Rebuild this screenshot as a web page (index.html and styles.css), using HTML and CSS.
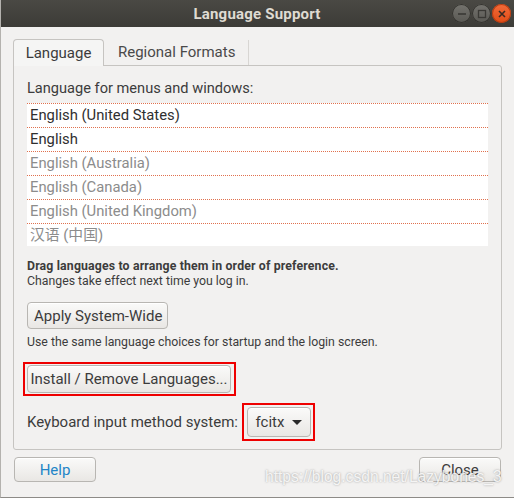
FILE: index.html
```html
<!DOCTYPE html>
<html>
<head>
<meta charset="utf-8">
<link rel="stylesheet" href="styles.css">
</head>
<body>
<div class="window">
  <div class="titlebar">
    <div></div>
    <div class="title">Language Support</div>
    <div class="wm-buttons">
      <span class="wm wm-min"><svg width="18" height="18" viewBox="0 0 18 18"><line x1="5" y1="9" x2="13" y2="9" stroke="#3a3935" stroke-width="1.6"/></svg></span>
      <span class="wm wm-max"><svg width="18" height="18" viewBox="0 0 18 18"><rect x="5.5" y="5.5" width="7" height="7" fill="none" stroke="#3a3935" stroke-width="1.3"/></svg></span>
      <span class="wm wm-close"><svg width="18" height="18" viewBox="0 0 18 18"><path d="M6 6 L12 12 M12 6 L6 12" stroke="#3a2a22" stroke-width="1.6"/></svg></span>
    </div>
  </div>
  <div class="content">
    <div class="tabs">
      <div class="tab tab-active">Language</div>
      <div class="tab tab-inactive">Regional Formats</div>
    </div>
    <div class="frame">
      <div class="label">Language for menus and windows:</div>
      <div class="list">
        <div class="row row-dark">English (United States)</div>
        <div class="row row-dark">English</div>
        <div class="row">English (Australia)</div>
        <div class="row">English (Canada)</div>
        <div class="row">English (United Kingdom)</div>
        <div class="row">汉语 (中国)</div>
      </div>
      <div class="note note-bold">Drag languages to arrange them in order of preference.</div>
      <div class="note">Changes take effect next time you log in.</div>
      <button class="btn btn-apply">Apply System-Wide</button>
      <div class="note note-use">Use the same language choices for startup and the login screen.</div>
      <div class="highlight hl-install">
        <button class="btn btn-install">Install / Remove Languages...</button>
      </div>
      <div class="kbd-row">
        <span class="label kbd-label">Keyboard input method system:</span>
        <div class="highlight hl-combo">
          <button class="btn combo">fcitx <span class="arrow"></span></button>
        </div>
      </div>
    </div>
    <div class="actions">
      <button class="btn btn-action btn-help">Help</button>
      <button class="btn btn-action btn-close">Close</button>
    </div>
  </div>
  <div class="watermark">https://blog.csdn.net/Lazybones_3</div>
</div>
</body>
</html>
```
FILE: styles.css
```css
html, body {
  margin: 0;
  padding: 0;
}
body {
  font-family: Roboto, "Noto Sans", sans-serif;
  background: #f2f1f0;
  color: #3c3c3c;
}
.window {
  width: 514px;
  height: 498px;
  box-sizing: border-box;
  border-left: 1px solid #b4b2ae;
  border-bottom: 1px solid #8d8b87;
  background: #f2f1f0;
  display: flex;
  flex-direction: column;
  position: relative;
  overflow: hidden;
}
.titlebar {
  height: 27px;
  flex: none;
  background: linear-gradient(#4a4944, #3c3b37);
  display: grid;
  grid-template-columns: 1fr auto 1fr;
  align-items: center;
  margin-left: -1px;
}
.title {
  color: #dfdbd2;
  font-weight: bold;
  font-size: 15px;
  letter-spacing: 0.2px;
}
.wm-buttons {
  justify-self: end;
  display: flex;
  gap: 1px;
  margin-right: 3px;
}
.wm {
  width: 19px;
  height: 19px;
  border-radius: 50%;
  display: flex;
  align-items: center;
  justify-content: center;
  background: linear-gradient(#74736e, #595853);
  box-shadow: inset 0 0 0 1px #34332f;
}
.wm svg { display: block; }
.wm-close {
  background: linear-gradient(#f36b3a, #e04c16);
  box-shadow: inset 0 0 0 1px #b53c12;
}
.content {
  flex: 1;
  padding: 12px 12px 0 12px;
  display: flex;
  flex-direction: column;
}
.tabs {
  display: flex;
  align-items: flex-end;
  height: 26px;
  position: relative;
  z-index: 1;
}
.tab {
  font-size: 15px;
  box-sizing: border-box;
  display: flex;
  align-items: center;
}
.tab-active {
  width: 91px;
  height: 27px;
  margin-bottom: -1px;
  justify-content: center;
  background: #f5f5f4;
  border: 1px solid #c6c4c1;
  border-bottom: none;
  border-radius: 4px 4px 0 0;
  padding-bottom: 1px;
}
.tab-inactive {
  height: 25px;
  padding: 0 13px 1px 14px;
  border-right: 1px solid #d8d6d3;
  color: #4a4a4a;
}
.frame {
  height: 385px;
  box-sizing: border-box;
  border: 1px solid #c6c4c1;
  border-radius: 0 3px 3px 3px;
  padding: 13px 13px 0 13px;
  display: flex;
  flex-direction: column;
  align-items: flex-start;
}
.label {
  font-size: 14.6px;
  line-height: 18px;
}
.list {
  align-self: stretch;
  margin-top: 6px;
  height: 143px;
  overflow: hidden;
  background: #ffffff;
}
.row {
  height: 24px;
  box-sizing: border-box;
  border-top: 1px dotted #e0714e;
  padding-left: 3px;
  font-size: 14.8px;
  line-height: 22px;
  color: #8c8c8c;
  font-family: Roboto, "Noto Sans CJK SC", sans-serif;
}
.row-dark { color: #2f2f2f; }
.note {
  font-size: 12.3px;
  line-height: 15px;
}
.note-bold {
  font-weight: bold;
  letter-spacing: 0.15px;
  margin-top: 13px;
}
.note-use { margin-top: 6px; }
.btn {
  font-family: Roboto, "Noto Sans", sans-serif;
  color: #3c3c3c;
  background: linear-gradient(#fafaf9, #e9e7e4);
  border: 1px solid #b8b6b2;
  border-radius: 4px;
  box-sizing: border-box;
  padding: 0 6px;
  font-size: 15px;
  white-space: nowrap;
  box-shadow: inset 0 1px 0 #ffffff;
}
.btn-apply {
  margin-top: 13px;
  height: 27px;
  width: 141px;
}
.highlight {
  border: 2px solid #ee0000;
  box-sizing: border-box;
  display: flex;
}
.hl-install {
  margin-top: 12px;
  margin-left: -4px;
  padding: 1px 3px 1px 2px;
}
.btn-install {
  height: 28px;
  width: 204px;
  padding: 0;
}
.kbd-row {
  margin-top: 7px;
  display: flex;
  align-items: center;
  gap: 4px;
}
.kbd-label {
  font-size: 15px;
}
.hl-combo {
  padding: 2px 2px 2px 3px;
}
.combo {
  height: 30px;
  width: 64px;
  display: flex;
  align-items: center;
  justify-content: center;
  gap: 8px;
  padding: 0 6px 0 6px;
}
.arrow {
  width: 0;
  height: 0;
  border-left: 5px solid transparent;
  border-right: 5px solid transparent;
  border-top: 5px solid #2a2a2a;
  margin-top: 1px;
}
.actions {
  margin-top: 7px;
  display: flex;
  justify-content: space-between;
  padding: 0 1px 0 1px;
}
.btn-action {
  width: 82px;
  height: 25px;
  font-size: 15px;
}
.btn-help { color: #2385c7; }
.watermark {
  position: absolute;
  left: 264px;
  top: 468px;
  font-family: "Liberation Sans", Arial, sans-serif;
  font-size: 15.6px;
  color: rgba(255, 255, 255, 0.85);
  text-shadow: 0 0 2px rgba(80, 80, 80, 0.55);
  white-space: nowrap;
}
```
